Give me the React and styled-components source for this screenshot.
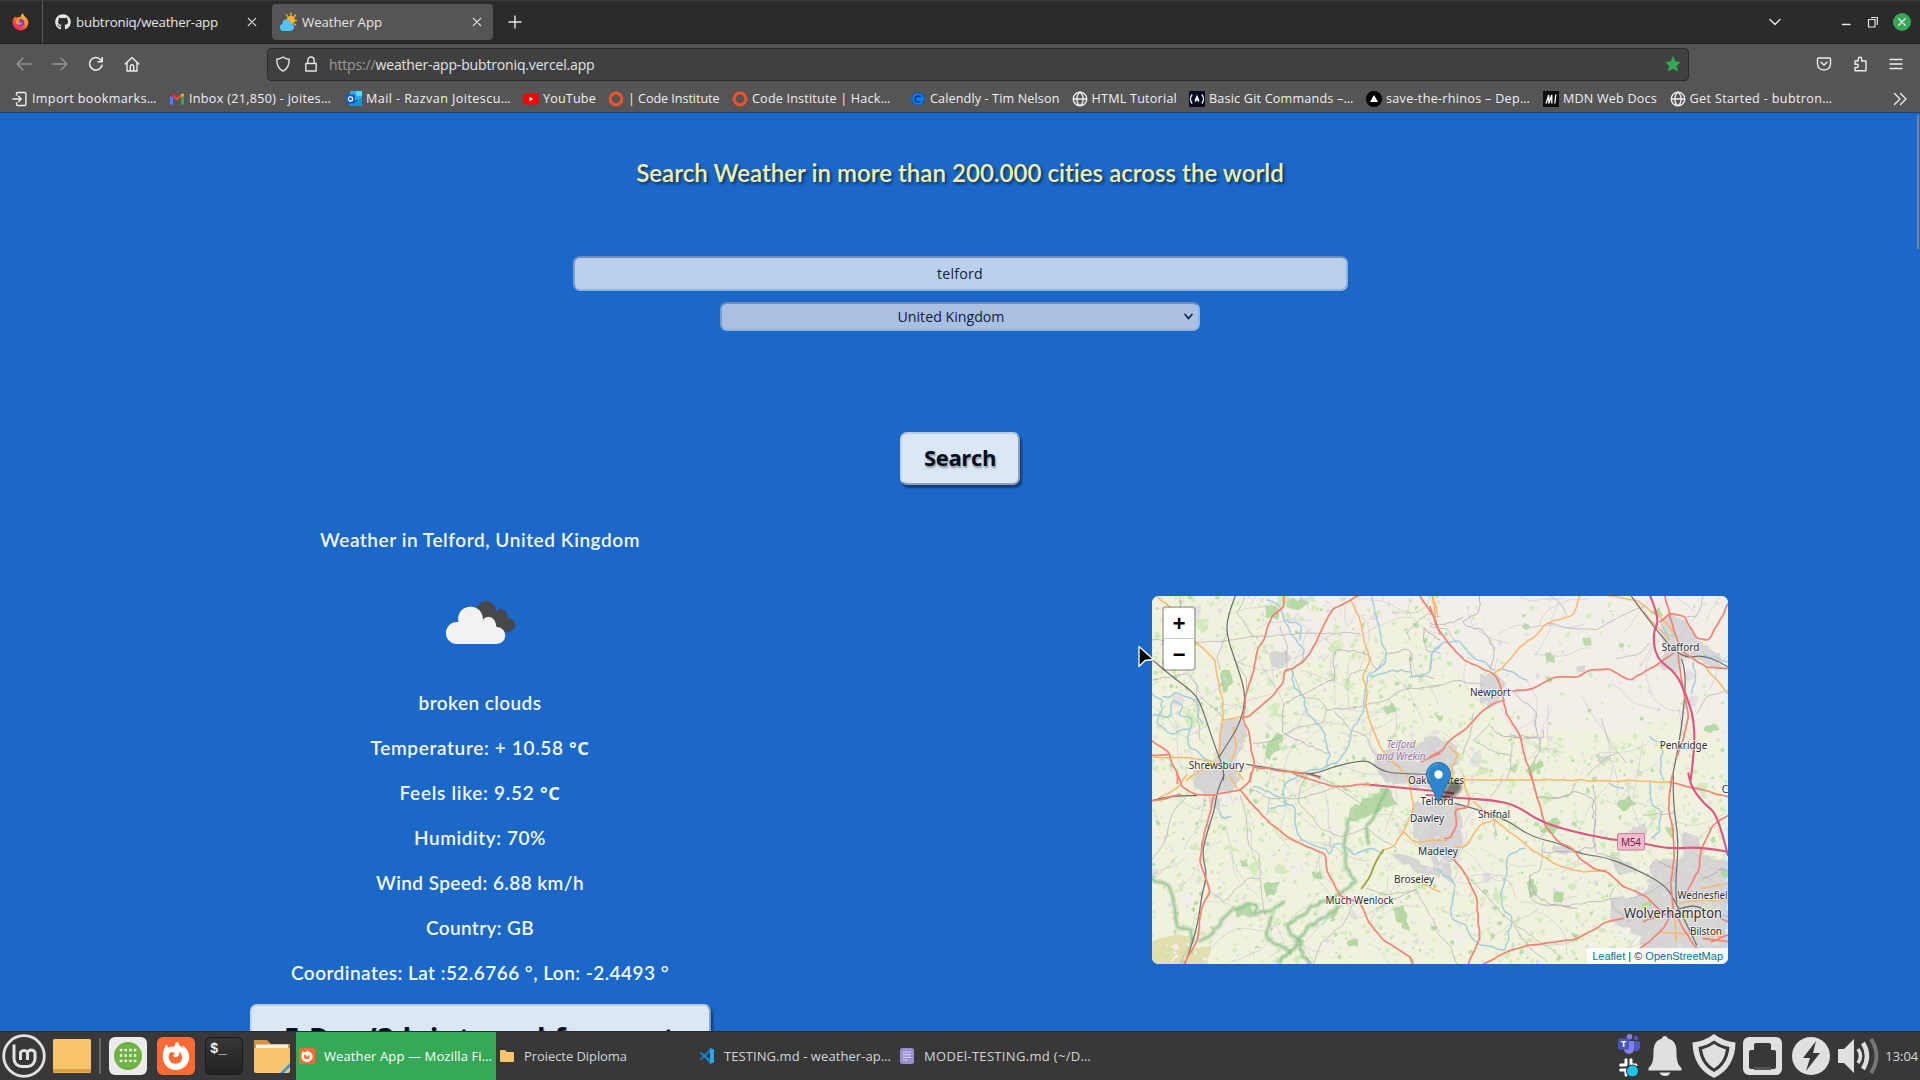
import React, { useLayoutEffect, useRef, useState } from "react";
import styled, { createGlobalStyle } from "styled-components";
import { FaGithub } from "react-icons/fa";

const UI = `"Open Sans", "Noto Sans", sans-serif`;
const ROUND = `Lato, "Open Sans", sans-serif`;

const Global = createGlobalStyle`
  * { box-sizing: border-box; }
  html, body { margin: 0; width: 1920px; height: 1080px; overflow: hidden; background: #1b68c8; }
  svg { display: block; flex: none; }
`;

/* ---------- text that keeps a fixed measure ---------- */
const FitBox = styled.span`
  display: inline-block;
  flex: none;
  white-space: nowrap;
`;
function Fit({ w, children }) {
  const ref = useRef(null);
  const [s, setS] = useState(0);
  useLayoutEffect(() => {
    const n = ref.current.textContent.length;
    setS((w - ref.current.getBoundingClientRect().width) / n);
  }, [w]);
  return <FitBox ref={ref} style={{ letterSpacing: `${s}px` }}>{children}</FitBox>;
}

/* ---------- browser chrome ---------- */
const Screen = styled.div`
  width: 1920px;
  height: 1080px;
  display: flex;
  flex-direction: column;
  overflow: hidden;
  font-family: ${UI};
`;
const TabBar = styled.div`
  height: 44px;
  flex: none;
  display: flex;
  align-items: center;
  background: #2b2b2b;
  border-top: 1px solid #3a3a3a;
  border-bottom: 1px solid #1f1f1f;
  color: #e6e6e6;
  font-size: 13.3px;
`;
const Pinned = styled.div`
  width: 43px;
  height: 100%;
  border-right: 1px solid #5c5c5c;
  display: flex;
  align-items: center;
  padding-left: 12px;
`;
const Tab = styled.div`
  width: ${(p) => p.$w}px;
  height: 36px;
  border-radius: 4px;
  background: ${(p) => (p.$active ? "#555" : "transparent")};
  display: flex;
  align-items: center;
  gap: 5px;
  padding: 0 8px 0 7px;
  margin-left: ${(p) => p.$ml}px;
`;
const Grow = styled.div`
  flex: 1;
`;
const Slot = styled.div`
  width: ${(p) => p.$w}px;
  flex: none;
  display: flex;
  align-items: center;
  justify-content: center;
`;
const CloseDot = styled.div`
  width: 18px;
  height: 18px;
  border-radius: 50%;
  background: #35a854;
  display: flex;
  align-items: center;
  justify-content: center;
`;
const NavBar = styled.div`
  height: 40px;
  flex: none;
  display: flex;
  align-items: center;
  background: #555;
  color: #ececec;
  padding: 0 6px;
`;
const NavButtons = styled.div`
  display: flex;
  width: 261px;
`;
const UrlBar = styled.div`
  width: 1422px;
  height: 33px;
  display: flex;
  align-items: center;
  background: #404040;
  border: 1px solid #2c2c2c;
  border-radius: 4px;
  padding: 0 7px;
  font-size: 14px;
  color: #e4e4e4;
`;
const UrlText = styled.div`
  padding-left: 10px;
  i { font-style: normal; color: #9c9c9c; }
`;
const Bookmarks = styled.div`
  height: 29px;
  flex: none;
  display: flex;
  align-items: center;
  background: #555;
  border-bottom: 1px solid #24446f;
  padding: 1px 12px 0 12px;
  font-size: 12.6px;
  color: #f0f0f0;
`;
const Mark = styled.div`
  width: ${(p) => p.$w}px;
  flex: none;
  display: flex;
  align-items: center;
  gap: 4px;
`;

/* ---------- page ---------- */
const Page = styled.main`
  position: relative;
  height: 918px;
  flex: none;
  overflow: hidden;
  display: flex;
  flex-direction: column;
  align-items: center;
  background: #1b68c8;
  padding-top: 45px;
`;
const Title = styled.h1`
  flex: none;
  margin: 0 0 68px;
  height: 30px;
  font: 600 24px/30px ${ROUND};
  color: #f4f0a6;
  text-shadow: 2px 2px 3px rgba(0, 0, 0, 0.55);
`;
const Field = styled.div`
  width: ${(p) => p.$w}px;
  height: ${(p) => p.$h}px;
  flex: none;
  display: flex;
  align-items: center;
  justify-content: center;
  font-size: 14.2px;
  color: #10213f;
  background: ${(p) => p.$bg};
  border: 2px solid;
  border-color: #6f8db9 #94b2dc #94b2dc #7f9cc8;
  border-radius: 7px;
`;
const Select = styled(Field)`
  margin-top: 11px;
  padding: 0 4px 0 0;
`;
const SelectText = styled.div`
  flex: 1;
  text-align: center;
  padding-right: 3px;
`;
const Button = styled.div`
  width: ${(p) => p.$w}px;
  height: ${(p) => p.$h}px;
  flex: none;
  margin-top: ${(p) => p.$mt}px;
  display: flex;
  align-items: ${(p) => (p.$h > 60 ? "flex-start" : "center")};
  justify-content: center;
  padding: ${(p) => (p.$h > 60 ? "13px 0 0" : "0 0 2px")};
  font: 700 ${(p) => p.$fs}px/1.36 ${UI};
  color: #04101f;
  background: #dbe7f5;
  border: 2px solid;
  border-color: #b9cbe2 #8ea2bd #8fa0b8 #c6d6ea;
  border-radius: 7px;
  box-shadow: 2px 3px 2px rgba(10, 30, 70, 0.6);
  text-shadow: 1px 2px 2px rgba(0, 0, 0, 0.35);
`;
const Columns = styled.div`
  width: 1920px;
  flex: none;
  display: flex;
  margin-top: 40px;
`;
const Column = styled.section`
  width: 960px;
  display: flex;
  flex-direction: column;
  align-items: center;
  padding-top: ${(p) => p.$pt}px;
`;
const Place = styled.div`
  height: 30px;
  margin-bottom: 17px;
  font: 600 19px/29px ${ROUND};
  color: #f2f7ff;
`;
const Line = styled.div`
  height: 45px;
  font: 600 19px/43px ${ROUND};
  color: #f2f7ff;
  b { font: 700 18px/1 "Noto Sans", sans-serif; }
`;
const Spacer = styled.div`
  height: 9px;
`;
const Scroll = styled.div`
  position: absolute;
  right: 1px;
  top: 2px;
  width: 2px;
  height: 134px;
  background: #6d87ab;
`;
const Pointer = styled.div`
  position: absolute;
  left: 1137px;
  top: 532px;
`;

/* ---------- map ---------- */
const MapBox = styled.div`
  position: relative;
  width: 576px;
  height: 368px;
  border-radius: 7px;
  overflow: hidden;
  background: #eef0d9;
`;
const Zoom = styled.div`
  position: absolute;
  left: 10px;
  top: 10px;
  width: 34px;
  border: 2px solid rgba(0, 0, 0, 0.22);
  border-radius: 4px;
  background: #fff;
  background-clip: padding-box;
`;
const ZoomKey = styled.div`
  height: ${(p) => (p.$first ? 31 : 30)}px;
  padding-top: 3px;
  border-bottom: ${(p) => (p.$first ? "1px solid #ccc" : "0")};
  text-align: center;
  font: 700 22px/30px "Liberation Mono", monospace;
  color: #000;
`;
const Credit = styled.div`
  position: absolute;
  right: 0;
  bottom: 0;
  height: 16px;
  padding: 0 5px;
  background: rgba(255, 255, 255, 0.8);
  font: 11px/16px "Liberation Sans", Arial, sans-serif;
  color: #333;
  a { color: #0078a8; }
`;

/* ---------- taskbar ---------- */
const TaskBar = styled.footer`
  height: 49px;
  flex: none;
  display: flex;
  align-items: center;
  background: #383838;
  border-top: 1px solid #222c3a;
  font-size: 13px;
  color: #d8d8d8;
`;
const Sep = styled.div`
  width: 2px;
  height: 36px;
  margin: 0 3px;
  background: #686868;
`;
const Task = styled.div`
  width: 200px;
  height: 48px;
  flex: none;
  display: flex;
  align-items: center;
  gap: 9px;
  padding-left: 3px;
  background: ${(p) => (p.$active ? "#36a956" : "transparent")};
  color: ${(p) => (p.$active ? "#fff" : "#d4d4d4")};
`;
const Stack = styled.div`
  width: 24px;
  display: flex;
  flex-direction: column;
  align-items: center;
  gap: 4px;
`;

/* ---------- small icons ---------- */
const Stroke = ({ d, s = 16, c = "currentColor", sw = 1.4, vb = 16, fill = "none" }) => (
  <svg width={s} height={s} viewBox={`0 0 ${vb} ${vb}`} fill={fill} stroke={c} strokeWidth={sw} strokeLinecap="round" strokeLinejoin="round">
    <path d={d} />
  </svg>
);
const CloseX = ({ s = 16, sw = 1.2 }) => <Stroke s={s} sw={sw} d="M4.300 4.300l7.400 7.400M11.700 4.300l-7.400 7.400" />;
const FirefoxColor = () => (
  <svg width="17" height="18" viewBox="0 0 17 18">
    <defs>
      <linearGradient id="fx" x1="1" y1="0" x2=".3" y2="1">
        <stop offset="0" stopColor="#ffe14a" /><stop offset=".45" stopColor="#ff8a1f" /><stop offset="1" stopColor="#ee1c5c" />
      </linearGradient>
    </defs>
    <path d="M1 6.500C1.500 5 2.200 4 3.200 3.200c0 .8.3 1.300.8 1.700C5 4 7 4 8.500 4.300 8.500 2.500 9.500 1 11 .2c.2 1.900 1.500 2.800 2.800 4.300C15.500 6 16.300 8 16.300 9.800c0 4.200-3.500 7.600-7.800 7.600S.6 14 .6 9.800C.6 8.600.700 7.500 1 6.500z" fill="url(#fx)" />
    <circle cx="8.600" cy="9.700" r="3.700" fill="#7a3fd6" />
    <path d="M4 6.500c2-.7 4-.2 4.500.8-1.500.2-2 .900-2 1.700 1.200.9 2.500.7 3.500.200-.5 2.800-3.800 3.400-5.500 1.300z" fill="#ff9a2a" />
  </svg>
);
const WeatherFav = () => (
  <svg width="18" height="20" viewBox="0 0 18 20">
    <g stroke="#f4b52c" strokeWidth="1.300" strokeLinecap="round"><path d="M12 1v2.500M7.500 2.800l1.300 1.800M16.600 3l-1.500 2M17.500 8.500h-2M16.500 13l-1.300-1.300" /></g>
    <circle cx="11.800" cy="8" r="3.900" fill="#f9b524" />
    <path d="M4 19a3.600 3.600 0 01-.6-7C3.500 9 5.300 7.300 7.600 7.300c2.400 0 4 1.700 4.200 4.100 2 .3 3.400 1.700 3.400 3.700 0 2.300-1.600 3.900-3.800 3.900z" fill="#52c3f7" />
  </svg>
);
const ImportIcon = () => <Stroke d="M4.500 4V2.700c0-.7.500-1.200 1.200-1.200h7c.7 0 1.200.5 1.200 1.200v10.600c0 .7-.5 1.200-1.200 1.200h-7c-.7 0-1.200-.5-1.200-1.200V12M1 8h8M6.500 5.300L9.200 8l-2.700 2.700" />;
const Gmail = () => (
  <svg width="16" height="16" viewBox="0 0 16 16">
    <path d="M1 13.500V4.300l3 2.200v7z" fill="#4285f4" /><path d="M12 13.500v-7l3-2.200v9.200z" fill="#34a853" />
    <path d="M4 6.500V3.200l4 3 4-3v3.300l-4 3z" fill="#ea4335" /><path d="M1 4.300C1 2.500 2.500 2 4 3.200v3.300z" fill="#c5221f" /><path d="M15 4.300C15 2.500 13.500 2 12 3.200v3.300z" fill="#fbbc04" />
  </svg>
);
const Outlook = () => (
  <svg width="16" height="16" viewBox="0 0 16 16">
    <rect x="4" width="12" height="9" fill="#28a8ea" /><rect x="10" width="6" height="5" fill="#50d9ff" />
    <path d="M3 7l6.500 4L16 7v8H3z" fill="#1490df" /><rect y="3.500" width="9" height="9" rx=".7" fill="#0f5ebd" />
    <circle cx="4.500" cy="8" r="2.100" fill="none" stroke="#fff" strokeWidth="1.300" />
  </svg>
);
const Youtube = () => (
  <svg width="16" height="16" viewBox="0 0 16 16"><rect x=".5" y="2.500" width="15" height="11" rx="2.500" fill="#f00" /><path d="M6.500 5.800v4.400L10.200 8z" fill="#fff" /></svg>
);
const Ring = () => (
  <svg width="16" height="16" viewBox="0 0 16 16"><circle cx="8" cy="8" r="5.900" fill="none" stroke="#f0512d" strokeWidth="3" /></svg>
);
const Calendly = () => (
  <svg width="16" height="16" viewBox="0 0 16 16"><circle cx="8" cy="8" r="7" fill="#0a5bc4" opacity=".7" /><circle cx="8" cy="8" r="5.600" fill="#0a7cff" /><path d="M10.400 6.200a3 3 0 100 3.600" fill="none" stroke="#0c2f66" strokeWidth="1.300" /></svg>
);
const GlobeIcon = () => <Stroke sw={1.300} d="M8 1.200a6.800 6.800 0 100 13.600A6.800 6.800 0 008 1.200M1.400 8h13.200M8 1.200C3.800 4.500 3.800 11.500 8 14.800M8 1.200c4.200 3.300 4.200 10.300 0 13.600" />;
const FccIcon = () => (
  <svg width="16" height="16" viewBox="0 0 16 16"><rect width="16" height="16" fill="#0a0a23" /><g fill="none" stroke="#fff" strokeWidth="1.200"><path d="M3.200 3.500C.9 6 .9 10 3.200 12.500M12.800 3.500c2.300 2.500 2.300 6.500 0 9" /></g><path d="M8 3.800l2.400 5.700-1.300 1.700L8 8.500l-1.100 2.700-1.300-1.700z" fill="#fff" /></svg>
);
const VercelIcon = () => (
  <svg width="16" height="16" viewBox="0 0 16 16"><circle cx="8" cy="8" r="8" fill="#000" /><path d="M8 4l4 7H4z" fill="#fff" /></svg>
);
const MdnIcon = () => (
  <svg width="16" height="16" viewBox="0 0 16 16"><rect width="16" height="16" fill="#0e0e0e" /><path d="M3 12.500L5.800 4v8.500L8.800 4v8.500M12.800 3.500l-1 9" fill="none" stroke="#fff" strokeWidth="1.300" /></svg>
);

const marks = [
  [ImportIcon, "Import bookmarks…", 157, 125],
  [Gmail, "Inbox (21,850) - joites…", 177, 142],
  [Outlook, "Mail - Razvan Joitescu…", 177, 145],
  [Youtube, "YouTube", 85, 53],
  [Ring, "| Code Institute", 124, 91.500],
  [Ring, "Code Institute | Hack…", 178, 138.500],
  [Calendly, "Calendly - Tim Nelson", 161.500, 129.500],
  [GlobeIcon, "HTML Tutorial", 117.500, 85.500],
  [FccIcon, "Basic Git Commands –…", 177, 144.500],
  [VercelIcon, "save-the-rhinos – Dep…", 177, 144],
  [MdnIcon, "MDN Web Docs", 126.500, 94],
  [GlobeIcon, "Get Started - bubtron…", 165, 143],
];

/* ---------- map drawing ---------- */
const pt = (s) => "M" + s.trim().split(/\s+/).join("L");
function smooth(s) {
  const p = s.trim().split(/\s+/).map((q) => q.split(",").map(Number));
  if (p.length < 3) return pt(s);
  let d = `M${p[0]}`;
  for (let i = 1; i < p.length - 1; i++) {
    const e = i === p.length - 2 ? p[i + 1] : [(p[i][0] + p[i + 1][0]) / 2, (p[i][1] + p[i + 1][1]) / 2];
    d += `Q${p[i]} ${e}`;
  }
  return d;
}
/* splits every leg of a line and nudges the new points, for a natural edge */
function rough(s, amp, seed) {
  const r = rng(seed);
  const p = s.trim().split(/\s+/).map((q) => q.split(",").map(Number));
  const out = [];
  for (let i = 0; i < p.length - 1; i++) {
    const [a, b] = [p[i], p[i + 1]];
    const n = Math.max(1, Math.round(Math.hypot(b[0] - a[0], b[1] - a[1]) / 14));
    for (let k = 0; k < n; k++) {
      const m = k ? amp : 0;
      out.push(`${(a[0] + ((b[0] - a[0]) * k) / n + (r() - 0.5) * m).toFixed(1)},${(a[1] + ((b[1] - a[1]) * k) / n + (r() - 0.5) * m).toFixed(1)}`);
    }
  }
  out.push(p[p.length - 1].join(","));
  return out.join(" ");
}
function rng(seed) {
  let x = seed;
  return () => (x = (x * 16807) % 2147483647) / 2147483647;
}
function patches() {
  const r = rng(4177);
  const out = [];
  for (let i = 0; i < 4200; i++) {
    const x = r() * 576, y = r() * 368;
    const ne = x > 285 && y < 125 + (x - 285) * 0.12;
    if (ne && r() < 0.78) continue;
    const big = r() < 0.03;
    const s = big ? 4 + r() * 4 : 0.6 + r() * 2.6;
    const pts = [];
    for (let k = 0; k < 5; k++) {
      const a = (k / 5) * 6.283 + r() * 0.8;
      const q = s * (0.4 + r() * 0.9);
      pts.push(`${(x + Math.cos(a) * q).toFixed(1)},${(y + Math.sin(a) * q).toFixed(1)}`);
    }
    const t = r();
    const c = t < 0.42 ? "#d3ecbc" : t < 0.52 ? "#bbdcab" : t < 0.82 ? "#f3eeec" : "#e3dfe1";
    out.push([pts.join(" "), c]);
  }
  return out;
}
function lanes() {
  const r = rng(911);
  const out = [];
  for (let i = 0; i < 150; i++) {
    let x = r() * 576, y = r() * 368, a = r() * 6.283;
    const p = [[x, y]];
    for (let k = 0; k < 6; k++) {
      a += (r() - 0.5) * 1.1;
      x += Math.cos(a) * 10;
      y += Math.sin(a) * 10;
      p.push([x.toFixed(1), y.toFixed(1)]);
    }
    out.push(p.map((q) => q.join(",")).join(" "));
  }
  return out;
}
const PATCHES = patches();
const LANES = lanes();

const quads = [
  {
    t: "translate(-32 -6) scale(.33333)",
    urban: ["300,400 320,388 350,385 382,410 372,470 345,510 350,570 220,570 240,545 292,500", "770,490 830,480 870,462 890,470 930,440 960,445 960,570 800,570 760,530", "450,190 500,180 510,215 480,235 455,225"],
    green: ["500,30 545,25 570,40 530,60 500,50", "435,45 470,50 475,90 440,85", "300,250 330,240 340,280 310,310", "440,470 470,430 490,440 480,480 450,510 435,490", "790,350 815,335 830,355 800,375"],
    minor: ["180,17 180,70 225,90", "96,150 225,155 300,155 400,140 560,130 640,130 720,130", "320,130 290,200 300,240", "400,140 350,70 375,17", "480,110 500,160 500,235", "515,240 550,320 600,330 620,360 610,400 540,410 460,450 400,460", "620,360 700,355 740,345 800,330 850,300 960,285", "645,365 690,420 740,440 760,490 840,530", "96,270 200,250 230,280 230,340 240,450", "240,320 290,360 310,388", "680,280 690,250 730,240 750,250", "960,80 920,70 860,130 870,150", "380,200 350,220 380,260 380,300"],
    bound: ["960,190 920,185 910,110 930,130 960,150", "750,200 700,180 650,180 640,210 645,265 600,285 560,310 530,320 495,335 485,390 490,430 540,450 590,480 630,490", "750,200 770,240 800,190 870,180 875,260 940,265"],
    river: ["440,30 480,50 490,80 520,140 555,180 545,215 515,240 520,290 555,330 558,370 605,410 620,460 632,495 610,535 540,548", "755,22 770,80 780,130 800,185 790,225 765,245 740,260 735,320 730,370 695,420 685,470 660,510 620,530", "750,258 820,240 870,245", "870,260 930,245 935,190 960,165", "96,310 130,330 120,370 110,400 150,430 215,415 215,385 175,375 190,345 160,330 150,380 100,375", "130,320 180,310 235,330 235,380 250,400", "210,420 205,465 245,500 280,515", "500,90 545,110 540,150"],
    rail: ["346,17 322,80 320,135 345,210 375,300 372,360 350,420 310,480 297,502", "96,208 150,255 225,310 245,350 275,440 297,502", "380,523 480,540 575,556 640,530 720,512 750,515 780,540 830,552 925,553", "297,502 315,540 310,570"],
    orange: ["228,158 270,195 285,210 292,260 308,330 308,385 300,440 297,500", "693,32 718,80 728,130 750,210 728,260 742,310 738,350 755,410 780,470 850,550", "110,17 150,52", "305,390 350,382 372,385", "96,500 200,503 300,518", "340,410 350,470 330,520 370,570", "200,570 260,530 300,515", "940,17 950,70"],
    red: ["492,17 490,52 455,80 440,120 432,150 413,175 408,210 395,260 378,310 370,383", "716,17 690,32 640,55 620,90 595,140 570,190 550,215 515,238 495,240 488,280 455,320 420,350 390,378 368,383", "368,385 385,420 393,470 403,520 395,550 390,575", "96,452 145,485 155,520 170,545 172,580", "96,495 145,493", "400,530 480,542 560,550 600,565", "900,17 925,55 940,75 960,130", "905,515 960,490"],
    pink: [],
  },
  {
    t: "translate(278 -6) scale(.33333)",
    urban: ["690,90 730,75 770,95 800,150 870,190 870,240 800,210 760,200 740,250 690,230 700,170", "150,250 210,260 230,310 190,350 150,340", "0,450 60,450 90,490 60,570 0,570", "440,230 465,225 465,245 440,248", "500,510 530,490 545,510 520,525"],
    green: ["345,190 380,195 375,220 350,215", "285,540 330,510 340,530 300,555", "820,420 850,400 870,420 840,430", "660,70 690,50 700,80", "10,370 40,375 30,395"],
    minor: ["360,17 400,50 410,75", "355,100 430,115 500,120 550,90 600,65 640,50", "0,292 80,272 160,285", "820,17 800,80 770,80", "240,440 340,445 340,420", "515,385 540,460 590,520", "470,560 520,510 560,490", "130,370 120,440 100,490", "245,460 240,540 230,570", "560,205 620,195 660,160", "893,300 830,320 800,370", "180,400 130,450 200,490 240,495", "0,110 50,115 80,160"],
    bound: ["150,17 145,70 100,90 110,110 160,120 190,170 185,220 180,240", "240,300 290,340 320,370 320,420 330,480 310,520", "185,410 220,440 320,440", "0,100 70,100 100,80"],
    river: ["0,240 5,190 40,155 90,155 130,200 190,240", "205,240 250,245 290,270", "700,110 720,140 740,135", "790,215 795,260 785,310", "660,440 700,460 690,540 700,570", "820,190 893,215"],
    rail: ["603,17 670,110 755,208 830,192 893,230", "755,208 766,240 765,320 750,450 725,570"],
    orange: ["450,17 430,75 350,100 320,135 270,170 220,230 190,252", "535,17 620,30 700,90 740,140", "830,235 893,310", "8,17 15,90", "60,470 85,495 65,530 70,570", "620,40 680,110 720,150"],
    red: ["0,50 20,110 60,165 105,212 150,232 190,252 205,270 220,325 228,370 270,435 285,500 308,570", "250,303 300,298 380,260 440,262 480,240 540,238 600,270 680,225 730,190", "705,17 720,80 745,160", "893,42 870,90 835,150 800,145 765,80 720,70 690,95", "760,185 830,232 893,236", "745,195 757,280 775,380 760,450 740,500", "222,330 190,340 150,370 110,415 60,450 40,480 0,500"],
    pink: ["660,17 690,85 668,130 678,205 740,250 770,320 790,380 795,470 782,570"],
  },
  {
    t: "translate(-32 179) scale(.33333)",
    urban: ["220,-15 330,-15 365,10 340,45 280,60 220,35", "265,60 310,70 300,110 270,100", "880,85 960,85 960,245 910,235 880,190", "800,225 850,240 960,290 960,310 900,295 850,270", "770,-15 960,-15 960,35 800,25"],
    green: ["690,100 740,70 800,38 835,90 790,95 760,115 720,130 685,135", "820,400 850,390 860,430 870,470 830,440", "430,330 480,320 470,350 440,370", "680,500 710,490 715,515 685,515", "575,290 600,285 610,310 580,310", "640,410 670,390 640,430 600,450", "345,400 390,385 400,420 350,430", "360,255 380,260 385,275 365,275"],
    minor: ["360,60 380,130 385,210 420,240 420,310 380,310 310,380 270,350", "96,255 130,210 160,110 200,60", "450,70 440,120", "535,80 600,160 660,185 740,160 830,220", "535,80 540,40 560,0", "600,0 700,70 740,100", "960,470 900,370 890,340 820,375 780,400", "700,385 670,450 600,510 580,567", "390,40 450,70 535,70 640,40", "630,185 630,220", "215,490 180,567", "740,340 800,360 890,345", "420,310 435,420"],
    bound: [],
    river: ["550,0 500,20 490,60 500,90 450,100", "400,35 450,50 485,70", "490,80 520,90 525,150 545,195 580,210 620,220 625,240 650,205 690,225 700,240 760,220 790,235", "300,110 310,130 330,125"],
    rail: ["312,0 290,50 285,100 262,170 245,235 262,300 245,360 235,440 215,510 195,567", "560,-5 600,5", "96,77 150,60 230,62"],
    orange: ["860,0 880,80 878,110 850,170 820,215 790,225", "850,170 880,200 960,195", "200,0 170,40 110,75", "330,0 350,40", "900,320 960,350"],
    red: ["172,-5 185,35 230,60 280,60 360,45 388,20 392,-5", "360,45 430,125 500,185 560,215 615,237 622,290 660,362 720,385 745,440 790,495 870,545 878,567", "282,60 265,130 245,210 240,260 270,350 245,400 230,500 192,567", "96,77 140,70 180,58", "520,-5 640,36 720,28 760,30"],
    pink: ["755,30 860,40 940,47 1000,55"],
    aonb: ["685,135 675,190 680,280 710,320 640,370 600,380 500,450 510,480 545,500", "745,205 740,150 770,110 800,45", "650,400 560,460 530,510 480,560", "540,500 545,545 570,567", "240,497 280,470 330,410 380,385 412,390 400,420 440,410 490,382", "455,425 440,490 510,530", "96,310 150,340 165,400 175,460 215,465 218,500"],
    olive: ["790,225 765,260 750,310 725,340"],
  },
  {
    t: "translate(278 179) scale(.33333)",
    urban: ["545,370 600,370 650,345 670,260 700,250 760,245 760,170 800,180 820,240 893,260 893,567 650,540 620,480 540,430", "0,90 95,95 100,210 70,260 0,240", "540,245 600,260 620,300 560,290", "370,205 440,220 410,240 365,225", "0,245 60,265 75,330 20,290", "590,170 650,140 650,180"],
    green: ["365,130 400,140 370,180 330,170", "290,320 310,310 320,360 300,370", "560,90 600,60 620,90 580,110", "420,470 450,480 440,500", "370,340 400,350 395,385 370,380", "870,280 893,285 893,310 875,305", "630,385 660,375 665,395 640,400"],
    minor: ["100,295 160,350 220,420 270,460 400,550", "0,450 60,510 80,567", "340,200 330,290 300,300 300,370 340,390 420,395", "200,110 190,150 200,180", "490,30 500,100 490,180", "440,20 420,60 370,70", "400,395 500,380 560,370", "550,340 540,370 550,400 600,440", "893,425 840,415 790,390 740,405", "720,320 640,360 600,370", "490,180 495,230 560,250", "320,70 300,0", "250,450 300,520 350,560", "640,120 730,115"],
    bound: ["320,70 390,70 440,50 490,70 490,220 400,230 340,230", "660,280 680,255 740,280 730,320", "300,300 310,360 370,390 440,400", "820,310 870,280 893,290"],
    river: ["285,220 235,240 230,300 215,350 220,400 245,430 235,480 225,525 190,515 150,510 120,480 110,450 70,435 60,400 75,330 20,280", "660,20 665,90 695,110 690,170 665,190", "540,25 580,40"],
    rail: ["730,0 728,80 747,200 735,340 740,380", "75,85 210,120 300,185 390,205 450,238 520,245 600,275 700,325 735,375 800,510", "740,405 790,385 815,400"],
    orange: ["90,15 400,15 720,20", "130,80 200,140 260,185 300,220 370,265 460,292 530,285", "0,195 50,195", "75,215 105,215 150,150 200,130", "690,470 800,478 893,482", "735,415 740,500", "740,385 800,378 893,375", "740,410 770,425 800,430", "100,0 105,40 120,70", "60,30 60,-10", "815,340 893,325"],
    red: ["300,-5 330,90 345,150 385,200 430,225 455,255 490,280 530,290 580,335 650,365 690,405 725,410", "720,22 800,40 893,65", "118,70 115,95 75,105 80,150 60,190 45,190", "70,250 105,295 140,370 150,490 115,567", "160,567 230,530 300,510 430,495 490,465 530,440 580,430", "727,0 715,100 730,170 733,250 722,320 730,400", "893,122 850,150 815,220 805,290 770,350", "725,415 700,460 660,500 630,520", "735,415 765,470 800,520", "845,500 893,480", "820,490 893,500", "720,415 690,420 640,440", "870,430 893,440"],
    pink: ["-10,60 70,68 190,75 260,92 330,140 430,170 530,192 640,205 720,222 810,215 893,230", "775,-5 780,30 820,85 865,120 893,240"],
  },
];
const wobble = { river: 11, aonb: 12, bound: 12, minor: 7, red: 4, orange: 5 };
const layer = (q, key, c, w, extra = {}) =>
  (q[key] || []).map((s, i) => (
    <path key={key + w + i} d={smooth(wobble[key] ? rough(s, wobble[key], i * 37 + 11) : s)} stroke={c} strokeWidth={w} {...extra} />
  ));

const places = [
  ["Shrewsbury", 64.500, 173, 55.500, 10.500],
  ["Newport", 338.300, 99.500, 40.500, 10.500],
  ["Stafford", 528.500, 54.500, 37.500, 10.500],
  ["Penkridge", 531.500, 153, 47.500, 10.500],
  ["Oakengates", 284, 188, 56, 10.500],
  ["Telford", 285, 208.500, 33, 10.500],
  ["Dawley", 275, 226, 34, 10.500],
  ["Madeley", 286, 259, 40, 10.500],
  ["Broseley", 262, 286.500, 40, 10.500],
  ["Much Wenlock", 207.500, 307.500, 68, 10.500],
  ["Shifnal", 342, 221.500, 32, 10.500],
  ["Wolverhampton", 521, 322, 98, 13.500],
  ["Wednesfiel", 550.500, 303, 50, 10.500],
  ["Bilston", 554, 338.500, 32, 10.500],
  ["C", 573, 197, 6.500, 10.500],
];

function MapDrawing() {
  return (
    <svg width="576" height="368" viewBox="0 0 576 368" fill="none">
      <defs><filter id="soft"><feGaussianBlur stdDeviation="1.800" /></filter></defs>
      <rect width="576" height="368" fill="#f0f2de" />
      <path d="M270 0H576V150L520 120L470 140L420 132L360 140L330 95L280 60Z" fill="#f2eee8" />
      <path d="M100 0H270L200 55L140 70Z" fill="#f3efe6" />
      <path d="M0 345L25 338L42 342L40 352L60 350L55 368H0Z" fill="#e2dfae" />
      {PATCHES.map(([p, c], i) => <polygon key={i} points={p} fill={c} />)}
      {quads.map((q, i) => (
        <g key={i} transform={q.t} opacity=".9">
          {q.urban.map((s, k) => <path key={k} d={pt(rough(s, 18, k + 5)) + "Z"} fill="#d5d2d4" />)}
          {q.green.map((s, k) => <path key={k} d={pt(rough(s, 14, k + 9)) + "Z"} fill="#b0d69e" />)}
        </g>
      ))}
      <g opacity=".45">
        {PATCHES.slice(0, 1300).map(([p, c], i) => <polygon key={i} points={p} fill={c} />)}
      </g>
      {LANES.map((s, i) => <path key={i} d={smooth(s)} stroke="#cac5cb" strokeWidth=".55" />)}
      {quads.map((q, i) => (
        <g key={i} transform={q.t} strokeLinecap="round" strokeLinejoin="round">
          {layer(q, "aonb", "#9ccb96", 16, { opacity: 0.4 })}
          {layer(q, "aonb", "#86bb84", 6, { opacity: 0.55 })}
          {layer(q, "minor", "#aeaaae", 2)}
          {layer(q, "bound", "#a795a8", 2.200, { strokeDasharray: "9 3 3 3" })}
          {layer(q, "river", "#a5cfdf", 4.500)}
          {layer(q, "orange", "#f9b96a", 4.500)}
          {layer(q, "olive", "#a6a63e", 6)}
          {layer(q, "rail", "#6c6c6a", 3.600)}
          {layer(q, "red", "#f28474", 5.200)}
          {layer(q, "pink", "#dd5680", 6.300)}
        </g>
      ))}
      <rect x="465.500" y="237.500" width="27" height="16.500" rx="1.500" fill="#f0bccb" stroke="#c8809a" />
      <text x="479" y="250" textAnchor="middle" textLength="20" fontFamily="Noto Sans" fontSize="10" fill="#7c1c44">M54</text>
      <g fontFamily="Noto Sans" fontStyle="italic" fontSize="10" fill="#98739f" stroke="#fff" strokeWidth="1.500" strokeOpacity=".6" paintOrder="stroke" textAnchor="middle">
        <text x="249" y="151.500" textLength="29">Telford</text>
        <text x="249" y="163.500" textLength="49">and Wrekin</text>
      </g>
      <g fontFamily="Noto Sans" fill="#2e2e2e" stroke="#fff" strokeWidth="2" strokeOpacity=".65" paintOrder="stroke" textAnchor="middle">
        {places.map(([n, x, y, w, f]) => <text key={n} x={x} y={y} textLength={w} lengthAdjust="spacingAndGlyphs" fontSize={f}>{n}</text>)}
      </g>
      <path d="M287 205L296 188Q304 182 309 188Q312 196 300 201Z" fill="#000" opacity=".5" filter="url(#soft)" />
      <g transform="translate(274 166)">
        <path d="M12.500.5C5.900.5.5 5.900.5 12.500c0 2.200.8 4.500 1.600 6L12.500 40.500l10.400-22c.8-1.500 1.600-3.800 1.600-6C24.500 5.900 19.100.5 12.500.5z" fill="#2f85cb" stroke="#2c6fa8" />
        <path d="M12.500 2C7 2 2 6.500 2 12.500c0 2 .7 4 1.500 5.500" stroke="#5fa5dc" />
        <circle cx="12.500" cy="12.500" r="4.200" fill="#fff" />
      </g>
    </svg>
  );
}

/* ---------- weather and taskbar drawings ---------- */
const Clouds = () => (
  <svg width="100" height="100" viewBox="0 0 100 100">
    <g fill="#484848"><circle cx="56" cy="39" r="10" /><circle cx="71" cy="43.500" r="6.500" /><circle cx="78" cy="53" r="7" /><path d="M50 35l28 14v11H55z" /></g>
    <g fill="#f2f2f2" stroke="#222" strokeOpacity=".25" strokeWidth=".6"><circle cx="40.500" cy="47" r="12.300" /><circle cx="58.500" cy="52" r="7.200" /><circle cx="67" cy="63.500" r="8.400" /></g>
    <g fill="#f2f2f2"><circle cx="27" cy="61" r="11.100" /><circle cx="40.500" cy="47" r="12.300" /><path d="M27 50h38l4 12-2 10H27z" /></g>
  </svg>
);
const Mint = () => (
  <svg width="44" height="44" viewBox="0 0 44 44" fill="none" stroke="#e2e2e2">
    <circle cx="22" cy="22" r="20.300" strokeWidth="2.800" />
    <path d="M12 10.500V25a7.500 7.500 0 007.500 7.500h6A7.500 7.500 0 0033 25v-6.500a4 4 0 00-7.500 0V26M25.500 26v-7.500a4 4 0 00-7 0V26" strokeWidth="3" strokeLinecap="butt" />
  </svg>
);
const FlameShape = ({ s }) => (
  <svg width={s} height={s} viewBox="0 0 38 38">
    <rect width="38" height="38" rx="6" fill="#f96a34" />
    <path d="M7 12c1-2.500 1.800-3.800 3-4.800 0 1.600.6 2.600 1.500 3.400 1.500-1 4-1.500 6.300-1C17.500 7 18.600 5.500 21 5c.3 3 2.500 4.200 4.500 6 .2-1 .1-1.800-.2-2.800 4 2.500 6.900 7 6.900 11.900 0 7.200-5.900 13-13.200 13S5.800 27.300 5.800 20c0-3 .3-5.500 1.200-8z" fill="#fff" />
    <path d="M13 15.500c2.500-.5 4.500 0 5.500 1.500-2 .3-2.500 1.200-2.500 2 1.500 1.300 3.500 1 5 .3 1.500-1 1.500-3 .3-5 4 2.700 4.700 6.500 3 9.700-2.500 3.500-8 3.700-11 .5-2.300-2.800-2-6-.3-9z" fill="#f96a34" />
  </svg>
);
const Dots = () => (
  <svg width="38" height="38" viewBox="0 0 38 38">
    <rect width="38" height="38" rx="6" fill="#ececec" /><circle cx="19" cy="19" r="14" fill="#6cb43f" />
    {[12, 16.700, 21.400, 26].flatMap((x) => [13, 18.500, 24].map((y) => <rect key={x + "-" + y} x={x - 1.200} y={y - 1.200} width="2.500" height="2.500" rx=".5" fill="#fff" />))}
  </svg>
);
const TermFrame = styled.div`
  width: 38px;
  height: 38px;
  border-radius: 5px;
  border: 1px solid #1a1a1a;
  background: linear-gradient(#363636, #222);
  padding: 4px 0 0 4px;
  font: 700 14px/15px "Liberation Mono", monospace;
  color: #eee;
`;
const Desk = () => (
  <svg width="38" height="36" viewBox="0 0 38 36"><rect y="1" width="38" height="34" rx="1.500" fill="#f9c56c" /><path d="M0 31h38v3.500H0z" fill="#d99f45" /></svg>
);
const Folder = () => (
  <svg width="38" height="36" viewBox="0 0 38 36"><path d="M1 2h13l4 4h18q1 0 1 1v10H1z" fill="#cf9544" /><rect x="3" y="6.500" width="32" height="6" fill="#f6efe3" /><path d="M1 10h36v23q0 2-2 2H3q-2 0-2-2z" fill="#f9c571" /><path d="M27 35l10-10v4l-6 6z" fill="#3a96d8" /></svg>
);
const MiniFolder = () => <svg width="16" height="16" viewBox="0 0 16 16"><path d="M1 3q0-1 1-1h4l2 2h6q1 0 1 1v8q0 1-1 1H2q-1 0-1-1z" fill="#f7c36c" /></svg>;
const Code = () => (
  <svg width="16" height="16" viewBox="0 0 16 16"><path d="M11 0l4 1.500v13L11 16z" fill="#2aa7f2" /><path d="M11 4.500L2 12.300.8 11.200 11 .8z" fill="#0f7cc4" /><path d="M11 11.500L2 3.700.8 4.800 11 15.200z" fill="#1688d2" /></svg>
);
const Doc = () => (
  <svg width="16" height="16" viewBox="0 0 16 16"><rect x="1" width="14" height="16" rx="2.500" fill="#9b8fd0" /><path d="M4 4h8M4 6.700h8M4 9.400h8M4 12h4.500" stroke="#ddd8f2" /></svg>
);
const TeamsBox = () => (
  <svg width="22" height="20" viewBox="0 0 22 20">
    <circle cx="11.500" cy="2.800" r="2.800" fill="#7b83eb" /><circle cx="18" cy="4" r="2.200" fill="#5059c9" /><path d="M14 7.500h8v6a4 4 0 01-7 2z" fill="#5059c9" /><path d="M6 7h10v8a5 5 0 01-10 0z" fill="#7b83eb" /><rect y="4.500" width="11" height="11" rx="1" fill="#4b53bc" />
    <text x="5.500" y="13.300" textAnchor="middle" fontFamily="Open Sans" fontWeight="700" fontSize="9" fill="#fff">T</text>
  </svg>
);
const Slack = () => (
  <svg width="20" height="20" viewBox="0 0 20 20"><g stroke="#fff" strokeWidth="3" strokeLinecap="round"><path d="M7 1.700v5M12 1.700v4M1.700 7h5M12 7h5M1.700 12h5M7 12v5" /></g><circle cx="13.500" cy="13" r="6" fill="#19c5ee" stroke="#232323" /></svg>
);
const Bell = () => <svg width="34" height="40" viewBox="0 0 34 40" fill="#e0e0e0"><path d="M17 0q2.500 0 3 2.500C27 4.500 28.500 10 28.500 16c0 9 1.500 13 5 16v2.500H.5V32c3.500-3 5-7 5-16C5.500 10 7 4.500 14 2.500 14.500 0 17 0 17 0zM11.500 36.500h11q-1.500 3.500-5.500 3.500t-5.500-3.500z" /></svg>;
const ShieldTray = () => (
  <svg width="44" height="44" viewBox="0 0 44 44"><path d="M22 0Q31 7 43.500 8.500 43 34 22 44 1 34 .5 8.500 13 7 22 0z" fill="#e0e0e0" /><path d="M22 6.500Q29 11.500 37.500 13 36 30.500 22 38 8 30.500 6.500 13 15 11.500 22 6.500z" fill="#383838" /><path d="M22 10Q28 14 34 15.500 32 28.500 22 34.500 12 28.500 10 15.500 16 14 22 10z" fill="#e0e0e0" /></svg>
);
const Net = () => <svg width="39" height="38" viewBox="0 0 39 38"><rect width="39" height="38" rx="6" fill="#e0e0e0" /><path d="M6 30V15q0-2 2-2h3V8q0-2 2-2h13q2 0 2 2v5h3q2 0 2 2v15q0 2-2 2H8q-2 0-2-2z" fill="#383838" /><path d="M11 30h17v3H11z" fill="#555" /></svg>;
const Bolt = () => <svg width="38" height="38" viewBox="0 0 38 38"><circle cx="19" cy="19" r="19" fill="#e0e0e0" /><path d="M24 4L11 21h7l-4 13 14-18h-7z" fill="#383838" /></svg>;
const Speaker = () => (
  <svg width="42" height="38" viewBox="0 0 42 38" fill="none"><path d="M0 12h6L16 2v34L6 26H0z" fill="#e0e0e0" /><path d="M20 12q5 7 0 14" stroke="#e0e0e0" strokeWidth="3.500" /><path d="M25 6q8 13 0 26" stroke="#e0e0e0" strokeWidth="4.500" /><path d="M33 2q11 17 0 34" stroke="#777" strokeWidth="4" /></svg>
);

const facts = [
  ["broken clouds", 123], [<>Temperature: + 10.58 <b>°C</b></>, 219], [<>Feels like: 9.52 <b>°C</b></>, 161],
  ["Humidity: 70%", 132], ["Wind Speed: 6.88 km/h", 208], ["Country: GB", 108], ["Coordinates: Lat :52.6766 °, Lon: -2.4493 °", 378],
];

export default function App() {
  return (
    <Screen>
      <Global />
      <TabBar>
        <Pinned><FirefoxColor /></Pinned>
        <Tab $w={220} $ml={5}><FaGithub size={16} /><Fit w={142}>bubtroniq/weather-app</Fit><Grow /><CloseX /></Tab>
        <Tab $w={221} $ml={4} $active><WeatherFav /><Fit w={80}>Weather App</Fit><Grow /><CloseX /></Tab>
        <Slot $w={43}><Stroke d="M8 2v12M2 8h12" /></Slot>
        <Grow />
        <Slot $w={36}><Stroke d="M3 5.500l5 5 5-5" /></Slot>
        <Slot $w={39} />
        <Slot $w={28}><Stroke d="M4.500 10.500h7.500" sw={1.500} /></Slot>
        <Slot $w={27}><Stroke d="M3.500 5.500h6.500v7.500h-6.500zM6.500 3.500h5.800v7" sw={1.200} /></Slot>
        <Slot $w={31}><CloseDot><CloseX s={14} sw={1.600} /></CloseDot></Slot>
        <Slot $w={2.500} />
      </TabBar>
      <NavBar>
        <NavButtons>
          <Slot $w={36}><Stroke c="#929292" d="M15 8H1.500M7 2L1.200 8 7 14" /></Slot>
          <Slot $w={36}><Stroke c="#929292" d="M1 8h13.500M9 2l5.800 6L9 14" /></Slot>
          <Slot $w={36}><Stroke sw={1.600} d="M14 9.300A6.300 6.300 0 1112.700 3.800L14 5.500M14.200 1.500v4.200h-4.200" /></Slot>
          <Slot $w={35}><Stroke d="M1.200 8L8 1.500 14.800 8M3 6.500V15h10V6.500M6.300 15v-4.500q0-1.700 1.700-1.700t1.700 1.700V15" /></Slot>
        </NavButtons>
        <UrlBar>
          <Slot $w={16}><Stroke d="M8 1Q11 3 14.200 3.300 14.500 12 8 15 1.500 12 1.800 3.300 5 3 8 1z" /></Slot>
          <Slot $w={12} />
          <Slot $w={16}><Stroke d="M2.800 7.500h10.400V15H2.800zM4.800 7.500V4.200a3.200 3.200 0 016.400 0v3.300" /></Slot>
          <UrlText><Fit w={265.500}><i>https://</i>weather-app-bubtroniq.vercel.app</Fit></UrlText>
          <Grow />
          <Stroke c="#35a854" fill="#35a854" d="M8 1l2.200 4.700 5 .6-3.700 3.500 1 5.100L8 12.400l-4.500 2.500 1-5.100L.8 6.300l5-.6z" sw={0.800} />
        </UrlBar>
        <Grow />
        <Slot $w={37}><Stroke d="M1.500 3q0-1 1-1h11q1 0 1 1v4.500q0 6.500-6.500 6.500T1.500 7.500zM5 6.200L8 9l3-2.800" /></Slot>
        <Slot $w={36}><Stroke d="M3 5h3.200V3a1.700 1.700 0 013.500 0v2H14v9.800H3v-3.300h1.700a1.600 1.600 0 000-3.200H3z" /></Slot>
        <Slot $w={36}><Stroke d="M2 3.500h12M2 8h12M2 12.500h12" /></Slot>
      </NavBar>
      <Bookmarks>
        {marks.map(([Icon, label, slot, w]) => (
          <Mark key={label} $w={slot}><Icon /><Fit w={w}>{label}</Fit></Mark>
        ))}
        <Grow />
        <Stroke d="M2.500 2.500L8 8l-5.500 5.500M8.500 2.500L14 8l-5.500 5.500" sw={1.300} />
      </Bookmarks>

      <Page>
        <Title><Fit w={648}>Search Weather in more than 200.000 cities across the world</Fit></Title>
        <Field $w={775} $h={35} $bg="#bbd0ec"><Fit w={46}>telford</Fit></Field>
        <Select $w={480} $h={29} $bg="#aac0e2">
          <SelectText><Fit w={107}>United Kingdom</Fit></SelectText>
          <Stroke s={11} vb={16} sw={2.400} d="M3 5l5 6 5-6" />
        </Select>
        <Button $w={120} $h={53} $mt={101} $fs={22}><Fit w={72}>Search</Fit></Button>
        <Columns>
          <Column $pt={0}>
            <Place><Fit w={320}>Weather in Telford, United Kingdom</Fit></Place>
            <Clouds />
            <Spacer />
            {facts.map(([t, w], i) => <Line key={i}><Fit w={w}>{t}</Fit></Line>)}
            <Button $w={461} $h={90} $mt={8} $fs={28}><Fit w={392}>5 Day/3 h interval forecast</Fit></Button>
          </Column>
          <Column $pt={71}>
            <MapBox>
              <MapDrawing />
              <Zoom><ZoomKey $first>+</ZoomKey><ZoomKey>−</ZoomKey></Zoom>
              <Credit><a>Leaflet</a> | © <a>OpenStreetMap</a></Credit>
            </MapBox>
          </Column>
        </Columns>
        <Scroll />
        <Pointer>
          <svg width="18" height="24" viewBox="0 0 18 24"><path d="M2 1.500L16.500 14.500 8 15.500 2 21.500z" fill="#000" stroke="#fff" strokeWidth="1.300" strokeLinejoin="round" /></svg>
        </Pointer>
      </Page>

      <TaskBar>
        <Slot $w={48}><Mint /></Slot>
        <Slot $w={48}><Desk /></Slot>
        <Sep />
        <Slot $w={48}><Dots /></Slot>
        <Slot $w={48}><FlameShape s={38} /></Slot>
        <Slot $w={48}><TermFrame>$_</TermFrame></Slot>
        <Slot $w={48}><Folder /></Slot>
        <Task $active><FlameShape s={16} /><Fit w={168}>Weather App — Mozilla Fi…</Fit></Task>
        <Task><MiniFolder /><Fit w={103}>Proiecte Diploma</Fit></Task>
        <Task><Code /><Fit w={167}>TESTING.md - weather-ap…</Fit></Task>
        <Task><Doc /><Fit w={167}>MODEl-TESTING.md (~/D…</Fit></Task>
        <Grow />
        <Stack><TeamsBox /><Slack /></Stack>
        <Slot $w={48.500}><Bell /></Slot>
        <Slot $w={48.500}><ShieldTray /></Slot>
        <Slot $w={48.500}><Net /></Slot>
        <Slot $w={48.500}><Bolt /></Slot>
        <Slot $w={48.500}><Speaker /></Slot>
        <Slot $w={36.500}><Fit w={33}>13:04</Fit></Slot>
      </TaskBar>
    </Screen>
  );
}
